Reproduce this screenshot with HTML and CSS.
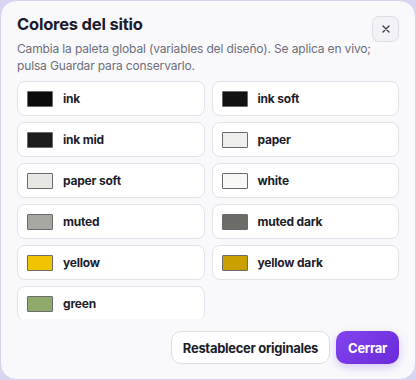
FILE: index.html
```html
<!DOCTYPE html>
<html lang="es">
<head>
    <meta charset="UTF-8">
    <meta name="viewport" content="width=device-width, initial-scale=1.0">
    <title>Colores del sitio</title>
    <link rel="stylesheet" href="styles.css">
</head>
<body>
    <div class="modal">
        <div class="modal-head">
            <h2>Colores del sitio</h2>
            <button class="close" aria-label="Cerrar">
                <svg width="10" height="10" viewBox="0 0 10 10"><path d="M2 2 L8 8 M8 2 L2 8" stroke="#3a3a48" stroke-width="1.3" stroke-linecap="round"/></svg>
            </button>
        </div>
        <p class="desc">Cambia la paleta global (variables del diseño). Se aplica en vivo; pulsa Guardar para conservarlo.</p>

        <div class="palette">
            <div class="swatch-row"><span class="swatch" style="background:#0b0b0b"></span>ink</div>
            <div class="swatch-row"><span class="swatch" style="background:#121212"></span>ink soft</div>
            <div class="swatch-row"><span class="swatch" style="background:#1b1b1b"></span>ink mid</div>
            <div class="swatch-row"><span class="swatch" style="background:#efefed"></span>paper</div>
            <div class="swatch-row"><span class="swatch" style="background:#e7e7e4"></span>paper soft</div>
            <div class="swatch-row"><span class="swatch" style="background:#f8f8f6"></span>white</div>
            <div class="swatch-row"><span class="swatch" style="background:#a8a8a3"></span>muted</div>
            <div class="swatch-row"><span class="swatch" style="background:#6b6b67"></span>muted dark</div>
            <div class="swatch-row"><span class="swatch" style="background:#f0c400"></span>yellow</div>
            <div class="swatch-row"><span class="swatch" style="background:#c9a000"></span>yellow dark</div>
            <div class="swatch-row"><span class="swatch" style="background:#8fa86b"></span>green</div>
        </div>

        <div class="modal-foot">
            <button class="btn btn-ghost">Restablecer originales</button>
            <button class="btn btn-primary">Cerrar</button>
        </div>
    </div>
</body>
</html>
```

FILE: styles.css
```css
html, body {
    margin: 0;
    height: 100%;
}
body {
    font-family: Inter, "Noto Sans", sans-serif;
    background: #d8d6f1;
    color: #1d1d2b;
}
.modal {
    box-sizing: border-box;
    width: 416px;
    height: 380px;
    padding: 12px 16px 15px;
    background: #f9f9fc;
    border: 1px solid #d3d1ee;
    border-radius: 16px;
    display: flex;
    flex-direction: column;
}
.modal-head {
    display: flex;
    justify-content: space-between;
    align-items: flex-start;
    height: 22px;
}
.modal-head h2 {
    margin: 0;
    font-size: 16.5px;
    line-height: 22px;
    font-weight: 700;
    letter-spacing: -0.2px;
    color: #1b1b2a;
}
.close {
    flex-shrink: 0;
    width: 27px;
    height: 26px;
    margin-top: 3px;
    padding: 0;
    border: 1px solid #dcdce6;
    border-radius: 7px;
    background: #f2f2f7;
    display: flex;
    align-items: center;
    justify-content: center;
    cursor: pointer;
}
.desc {
    margin: 5px 0 0;
    font-size: 12px;
    line-height: 17px;
    letter-spacing: -0.15px;
    color: #6e6e7a;
    padding-right: 12px;
}

.palette {
    margin-top: 7px;
    height: 238px;
    overflow: hidden;
    display: grid;
    grid-template-columns: 1fr 1fr;
    grid-auto-rows: 35px;
    gap: 6px 7px;
}
.swatch-row {
    box-sizing: border-box;
    display: flex;
    align-items: center;
    gap: 10px;
    padding: 0 9px;
    background: #fff;
    border: 1px solid #e2e2ea;
    border-radius: 8px;
    font-size: 12px;
    font-weight: 700;
    color: #1d1d2b;
    letter-spacing: -0.2px;
}
.swatch {
    box-sizing: border-box;
    width: 26px;
    height: 16px;
    border: 1px solid #6a6a6a;
    border-radius: 1px;
}

.modal-foot {
    margin-top: auto;
    display: flex;
    justify-content: flex-end;
    gap: 6px;
}
.btn {
    height: 33px;
    padding: 0 11px;
    font-family: inherit;
    font-size: 13px;
    font-weight: 700;
    letter-spacing: -0.3px;
    border-radius: 10px;
    cursor: pointer;
}
.btn-ghost {
    background: #fff;
    color: #1d1d2b;
    border: 1px solid #dedee8;
}
.btn-primary {
    padding: 0 12px;
    border: none;
    color: #fff;
    background: linear-gradient(135deg, #8244ee, #6b2bd9);
    box-shadow: 0 3px 8px rgba(110, 50, 220, 0.25);
}
```
